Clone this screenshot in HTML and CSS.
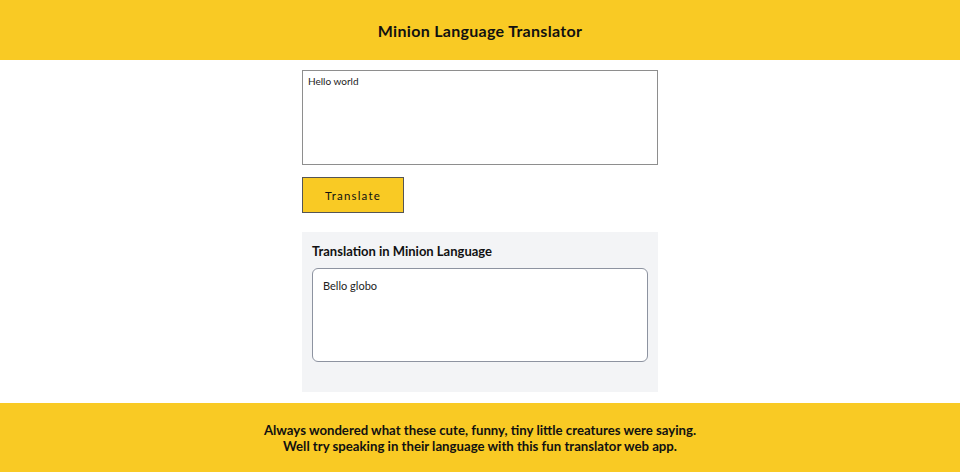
FILE: index.html
```html
<!DOCTYPE html>
<html>
<head>
<meta charset="utf-8">
<link rel="stylesheet" href="styles.css">
</head>
<body>
<header class="top">Minion Language Translator</header>
<main class="main">
  <textarea class="input">Hello world</textarea>
  <button class="btn">Translate</button>
  <section class="output">
    <h2 class="out-title">Translation in Minion Language</h2>
    <div class="out-box">Bello globo</div>
  </section>
</main>
<footer class="foot">
  <p>Always wondered what these cute, funny, tiny little creatures were saying.</p>
  <p>Well try speaking in their language with this fun translator web app.</p>
</footer>
</body>
</html>
```
FILE: styles.css
```css
* { box-sizing: border-box; }
body {
  margin: 0;
  font-family: Lato, "Noto Sans", sans-serif;
  color: #111;
  background: #fff;
}
.top {
  height: 60px;
  background: #f9ca24;
  display: flex;
  align-items: center;
  justify-content: center;
  font-weight: 700;
  font-size: 16px;
  letter-spacing: 0.3px;
}
.main {
  width: 356px;
  margin: 0 auto;
  padding-top: 10px;
  display: flex;
  flex-direction: column;
  align-items: flex-start;
}
.input {
  width: 356px;
  height: 95px;
  border: 1px solid #8e8e8e;
  padding: 4px 5px;
  font-family: Lato, "Noto Sans", sans-serif;
  font-size: 10px;
  resize: none;
  display: block;
  margin: 0;
  color: #222;
}
.btn {
  margin-top: 12px;
  width: 102px;
  height: 36px;
  background: #f9ca24;
  border: 1px solid #555;
  font-family: Lato, "Noto Sans", sans-serif;
  font-size: 11.5px;
  letter-spacing: 1.2px;
  color: #111;
  padding: 0;
}
.output {
  margin-top: 19px;
  width: 356px;
  height: 160px;
  background: #f3f4f6;
  padding: 10px 10px 30px;
}
.out-title {
  margin: 0;
  font-size: 13px;
  font-weight: 700;
  line-height: 18px;
  height: 26px;
}
.out-box {
  height: 94px;
  background: #fff;
  border: 1px solid #8d93a0;
  border-radius: 6px;
  padding: 10px;
  font-size: 11px;
  color: #222;
}
.foot {
  margin-top: 11px;
  height: 69px;
  background: #f9ca24;
  display: flex;
  flex-direction: column;
  justify-content: center;
  align-items: center;
  font-weight: 700;
  font-size: 13.2px;
  line-height: 16px;
}
.foot p { margin: 0; }
```
